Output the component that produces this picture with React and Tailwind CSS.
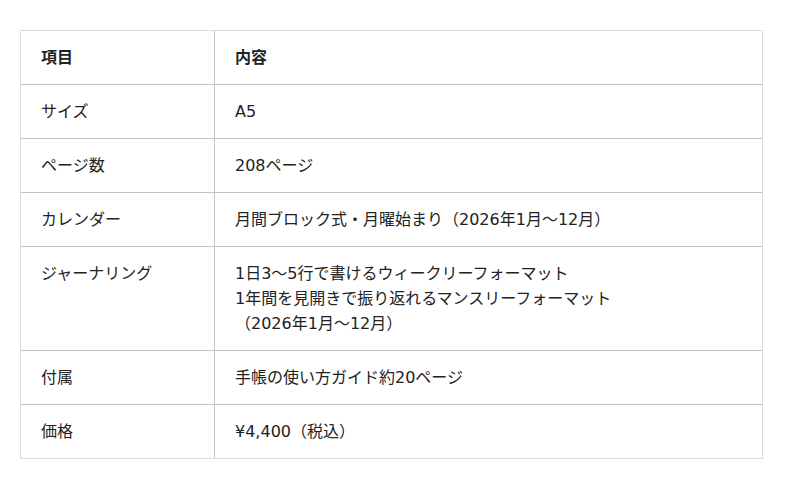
const rows = [
  { label: 'サイズ', value: ['A5'] },
  { label: 'ページ数', value: ['208ページ'] },
  { label: 'カレンダー', value: ['月間ブロック式・月曜始まり（2026年1月〜12月）'] },
  {
    label: 'ジャーナリング',
    value: [
      '1日3〜5行で書けるウィークリーフォーマット',
      '1年間を見開きで振り返れるマンスリーフォーマット',
      '（2026年1月〜12月）',
    ],
  },
  { label: '付属', value: ['手帳の使い方ガイド約20ページ'] },
  { label: '価格', value: ['¥4,400（税込）'] },
];

export default function App() {
  return (
    <div
      className="min-h-[489px] bg-white pt-[30px] pl-[20px] text-[16px] leading-[25px] text-[#222]"
      style={{ fontFamily: '"DejaVu Sans", "Noto Sans CJK JP", sans-serif' }}
    >
      <div className="w-[743px] border border-[#dcdcdc]">
        {/* Header */}
        <div className="flex border-b border-[#c4c4c4] font-bold">
          <div className="w-[194px] shrink-0 border-r border-[#c4c4c4] px-5 py-[14px]">項目</div>
          <div className="flex-1 px-5 py-[14px]">内容</div>
        </div>

        {rows.map((row, i) => (
          <div
            key={row.label}
            className={`flex ${i < rows.length - 1 ? 'border-b border-[#c4c4c4]' : ''}`}
          >
            <div className="w-[194px] shrink-0 border-r border-[#c4c4c4] px-5 py-[14px]">
              {row.label}
            </div>
            <div className="flex-1 px-5 py-[14px]">
              {row.value.map((line) => (
                <div key={line}>{line}</div>
              ))}
            </div>
          </div>
        ))}
      </div>
    </div>
  );
}
